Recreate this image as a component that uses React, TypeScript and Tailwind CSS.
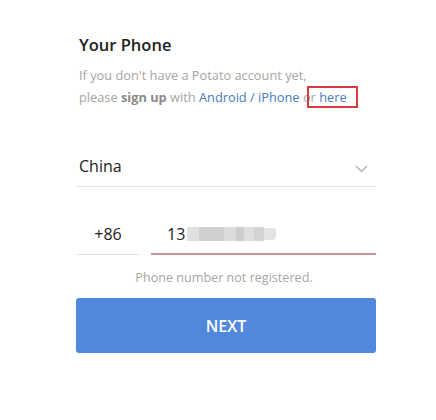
export default function App() {
  return (
    <div className="min-h-[420px] w-[436px] bg-white" style={{ fontFamily: '"Open Sans", sans-serif' }}>
      <div className="ml-[76px] w-[300px] pt-[32px]">
        <h1 className="pl-[3px] text-[16.5px] font-semibold leading-[26px] text-[#222]">Your Phone</h1>
        <p className="mt-[6px] pl-[3px] text-[12.8px] leading-[22px] text-[#a5a5a5]">
          If you don't have a Potato account yet,
          <br />
          please <span className="font-bold text-[#8a8a8a]">sign up</span> with{" "}
          <span className="text-[#4a7bbb]">Android / iPhone</span>{" "}
          <span className="relative">
            or <span className="text-[#4a7bbb]">here</span>
            <span className="absolute -top-[2px] left-[4px] h-[22px] w-[51px] border-[2.5px] border-[#d93a3f]" />
          </span>
        </p>

        <div className="mt-[38px] flex h-[41px] items-center justify-between border-b border-[#e3e3e3] pl-[3px] pr-[8px]">
          <span className="text-[16px] text-[#222]">China</span>
          <svg width="13" height="8" viewBox="0 0 13 8" className="mt-[6px]">
            <path d="M1 1l5.5 5.5L12 1" fill="none" stroke="#b5b5b5" strokeWidth="1.5" />
          </svg>
        </div>

        <div className="mt-[26px] flex items-end gap-[11px]">
          <div className="flex h-[42px] w-[64px] items-center justify-center border-b border-[#e3e3e3] text-[16px] text-[#222]">
            +86
          </div>
          <div className="flex h-[41px] flex-1 items-center border-b-2 border-[#c79797] pl-[16px] text-[16px] text-[#222]">
            <span>13</span>
            <span className="ml-[2px] flex h-[14px] items-center">
              <span className="h-[14px] w-[12px] bg-[#e0e0e0]" />
              <span className="h-[14px] w-[25px] bg-[#cfcfcf]" />
              <span className="h-[14px] w-[12px] bg-[#dcdcdc]" />
              <span className="h-[14px] w-[8px] bg-[#cdcdcd]" />
              <span className="h-[14px] w-[10px] bg-[#dedede]" />
              <span className="h-[14px] w-[10px] bg-[#d3d3d3]" />
              <span className="h-[12px] w-[12px] rounded-r bg-[#e3e3e3]" />
            </span>
          </div>
        </div>

        <p className="mt-[14px] pr-[4px] text-center text-[12.6px] leading-[18px] text-[#a5a5a5]">Phone number not registered.</p>

        <button className="mt-[11px] flex h-[55px] w-full items-center justify-center rounded-[3px] bg-[#5288dc] text-[16px] font-semibold text-white">
          NEXT
        </button>
      </div>
    </div>
  );
}
